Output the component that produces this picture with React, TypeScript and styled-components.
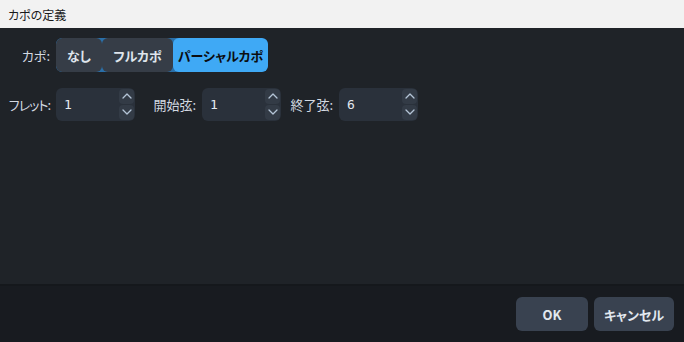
import React, { useState } from "react";
import styled, { createGlobalStyle } from "styled-components";

const Global = createGlobalStyle`
  html, body { margin: 0; padding: 0; background: #1f2328; }
  body {
    font-family: "Noto Sans CJK JP", "Noto Sans", sans-serif;
    font-feature-settings: "palt";
  }
  button { font-feature-settings: "palt"; }
`;

const Window = styled.div`
  width: 684px;
  height: 342px;
  display: flex;
  flex-direction: column;
  background: #1f2328;
  color: #dde3ea;
`;

const TitleBar = styled.div`
  height: 28px;
  flex-shrink: 0;
  background: #f2f2f2;
  color: #1a1a1a;
  font-size: 12px;
  display: flex;
  align-items: center;
  padding-left: 8px;
`;

const Body = styled.div`
  flex: 1;
  display: flex;
  flex-direction: column;
  gap: 15px;
  padding: 10px 0 0 0;
`;

const Row = styled.div`
  display: flex;
  align-items: center;
  height: 34px;
`;

const Label = styled.div<{ $w: number; $tight?: boolean }>`
  width: ${(p) => p.$w}px;
  text-align: right;
  font-size: 13px;
  letter-spacing: ${(p) => (p.$tight ? "-1px" : "0")};
  color: #d3d9e1;
  padding-right: 6px;
  box-sizing: border-box;
  white-space: nowrap;
`;

const Segmented = styled.div`
  display: flex;
  height: 34px;
  border-radius: 6px;
  background: #2a6fa8;
  overflow: hidden;
`;

const Segment = styled.button<{ $active?: boolean; $w: number }>`
  width: ${(p) => p.$w}px;
  border: 0;
  margin: 0;
  padding: 0;
  font-family: inherit;
  font-size: 13px;
  font-weight: 700;
  border-radius: 6px;
  background: ${(p) => (p.$active ? "#3fa9f5" : "#363d47")};
  color: ${(p) => (p.$active ? "#0b0d10" : "#dfe5ec")};
  cursor: pointer;
`;

const Spin = styled.div`
  width: 79px;
  height: 33px;
  border-radius: 6px;
  background: #2a313b;
  display: flex;
  align-items: center;
`;

const SpinValue = styled.div`
  flex: 1;
  padding-left: 8px;
  font-family: "DejaVu Sans Mono", monospace;
  font-size: 13px;
  color: #e4e9ef;
`;

const Arrows = styled.div`
  width: 15px;
  height: 31px;
  margin-right: 1px;
  display: flex;
  flex-direction: column;
  gap: 1px;
`;

const Arrow = styled.div`
  flex: 1;
  border-radius: 4px;
  background: #333b46;
  display: flex;
  align-items: center;
  justify-content: center;
`;

const Footer = styled.div`
  height: 58px;
  flex-shrink: 0;
  background: #181b20;
  border-top: 2px solid #15181c;
  display: flex;
  justify-content: flex-end;
  align-items: center;
  gap: 6px;
  padding-right: 10px;
  box-sizing: border-box;
`;

const Button = styled.button<{ $w: number }>`
  width: ${(p) => p.$w}px;
  height: 34px;
  border: 0;
  border-radius: 6px;
  background: #394250;
  color: #e2e8ef;
  font-family: inherit;
  font-size: 13px;
  font-weight: 700;
  cursor: pointer;
`;

const Chevron = ({ up }: { up?: boolean }) => (
  <svg width="10" height="6" viewBox="0 0 10 6">
    <path
      d={up ? "M1 5 L5 1 L9 5" : "M1 1 L5 5 L9 1"}
      fill="none"
      stroke="#b4c4d6"
      strokeWidth="1.3"
      strokeLinecap="round"
      strokeLinejoin="round"
    />
  </svg>
);

const SpinBox = ({ value }: { value: number }) => (
  <Spin>
    <SpinValue>{value}</SpinValue>
    <Arrows>
      <Arrow>
        <Chevron up />
      </Arrow>
      <Arrow>
        <Chevron />
      </Arrow>
    </Arrows>
  </Spin>
);

export default function App() {
  const [mode, setMode] = useState(2);
  const modes = [
    { label: "なし", w: 46 },
    { label: "フルカポ", w: 71 },
    { label: "パーシャルカポ", w: 95 },
  ];
  return (
    <>
      <Global />
      <Window>
        <TitleBar>カポの定義</TitleBar>
        <Body>
          <Row>
            <Label $w={56}>カポ:</Label>
            <Segmented>
              {modes.map((m, i) => (
                <Segment key={m.label} $w={m.w} $active={mode === i} onClick={() => setMode(i)}>
                  {m.label}
                </Segment>
              ))}
            </Segmented>
          </Row>
          <Row>
            <Label $w={56} $tight>フレット:</Label>
            <SpinBox value={1} />
            <Label $w={67}>開始弦:</Label>
            <SpinBox value={1} />
            <Label $w={58}>終了弦:</Label>
            <SpinBox value={6} />
          </Row>
        </Body>
        <Footer>
          <Button $w={72}>OK</Button>
          <Button $w={80}>キャンセル</Button>
        </Footer>
      </Window>
    </>
  );
}
